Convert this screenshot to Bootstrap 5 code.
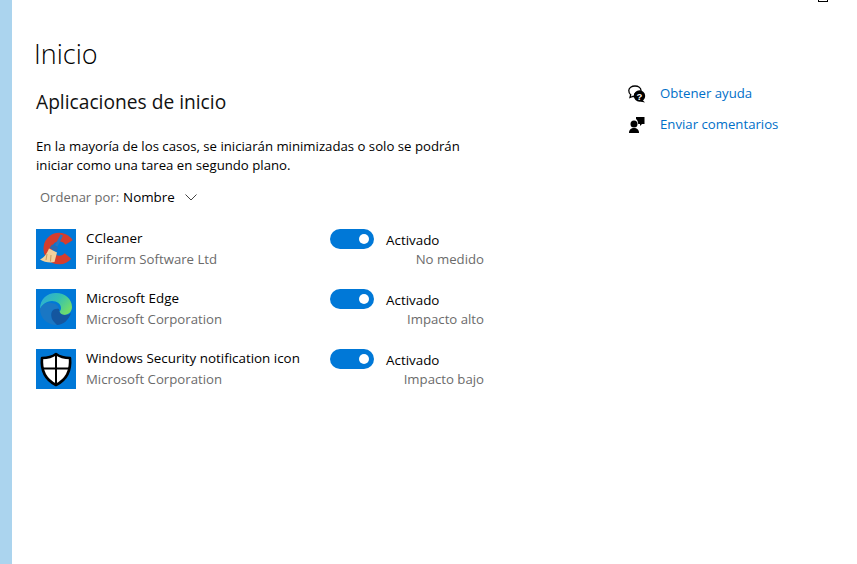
<!DOCTYPE html>
<html lang="es">
<head>
    <meta charset="UTF-8">
    <meta name="viewport" content="width=device-width, initial-scale=1.0">
    <title>Inicio</title>
    <link href="https://cdn.jsdelivr.net/npm/bootstrap@5.3.0/dist/css/bootstrap.min.css" rel="stylesheet">
    <style>
        html, body {
            height: 100%;
        }
        body {
            font-family: "Open Sans", "Liberation Sans", sans-serif;
            font-size: 13.4px;
            color: #000;
            overflow: hidden;
        }
        .side-strip {
            width: 12px;
            background-color: #abd4ee;
        }
        .main-pane {
            width: 580px;
            padding: 35px 0 0 24px;
        }
        .help-pane {
            padding: 78px 0 0 36px;
        }
        .page-title {
            font-size: 27px;
            font-weight: 300;
            line-height: 38px;
            margin: 0 0 0 -2px;
        }
        .sub-title {
            font-size: 19.2px;
            font-weight: 400;
            line-height: 26px;
            margin: 16px 0 22px;
            color: #111;
        }
        .intro-text {
            line-height: 19px;
            width: 440px;
            margin-bottom: 13px;
            font-size: 13.2px;
        }
        .sort-line {
            padding-left: 4px;
            line-height: 19px;
            height: 19px;
            margin-bottom: 22px;
        }
        .sort-label {
            color: #6b6b6b;
            font-size: 13px;
            margin-right: 4px;
        }
        .sort-chevron {
            margin-left: 10px;
        }
        .muted-text {
            color: #6b6b6b;
            font-size: 13.2px;
        }
        .app-row {
            height: 60px;
        }
        .app-icon {
            width: 40px;
            height: 40px;
            background-color: #0078d7;
            flex: none;
        }
        .app-name {
            width: 254px;
            padding-left: 10px;
            line-height: 21px;
            margin-top: -1px;
        }
        .app-state {
            width: 154px;
        }
        .toggle-pill {
            width: 44px;
            height: 20px;
            border-radius: 10px;
            background-color: #0078d7;
            position: relative;
        }
        .toggle-pill::after {
            content: "";
            position: absolute;
            right: 5px;
            top: 5px;
            width: 10px;
            height: 10px;
            border-radius: 50%;
            background-color: #fff;
        }
        .state-text {
            line-height: 20px;
        }
        .state-label {
            position: relative;
            top: 1px;
            margin-left: 12px;
        }
        .help-link {
            color: #006fc8;
            font-size: 13.2px;
            text-decoration: none;
            margin-left: 14px;
        }
        .help-item {
            height: 31px;
        }
        .window-mark {
            position: absolute;
            left: 818px;
            top: -8px;
            width: 10px;
            height: 10px;
            border: 1px solid #000;
        }
    </style>
</head>
<body class="d-flex">
    <div class="side-strip"></div>
    <div class="window-mark"></div>

    <!-- Left column -->
    <div class="main-pane">
        <h1 class="page-title">Inicio</h1>
        <h2 class="sub-title">Aplicaciones de inicio</h2>
        <p class="intro-text">En la mayoría de los casos, se iniciarán minimizadas o solo se podrán iniciar como una tarea en segundo plano.</p>
        <div class="sort-line d-flex align-items-center">
            <span class="sort-label">Ordenar por:</span>
            <span>Nombre</span>
            <svg class="sort-chevron" width="12" height="7" viewBox="0 0 12 7"><path d="M.5.500l5.500 5.500 5.500-5.500" fill="none" stroke="#444" stroke-width="1"/></svg>
        </div>

        <!-- CCleaner -->
        <div class="app-row d-flex">
            <div class="app-icon">
                <svg width="40" height="40" viewBox="0 0 40 40">
                    <path d="M33 13.500A11.500 11.500 0 1 0 32 27" fill="none" stroke="#d53d2d" stroke-width="8.500"/>
                    <path d="M24.500 5.500l2.500 1-5.500 11-2.500-1.200z" fill="#2a74c0"/>
                    <path d="M16 15.500l6 3-1.500 4-7-3.500z" fill="#2c69b0"/>
                    <path d="M13 19.500l8 4-2.500 9.500c-5 1-10.500 0-14.500-2.500 4-1.500 7-6 9-11z" fill="#f2d29d"/>
                    <path d="M11 25l-1 6M15 26l-.5 6.500" stroke="#c99a5e" stroke-width="1" fill="none"/>
                </svg>
            </div>
            <div class="app-name">
                <div>CCleaner</div>
                <div class="muted-text">Piriform Software Ltd</div>
            </div>
            <div class="app-state">
                <div class="d-flex">
                    <div class="toggle-pill"></div>
                    <span class="state-label state-text">Activado</span>
                </div>
                <div class="text-end muted-text state-text">No medido</div>
            </div>
        </div>

        <!-- Edge -->
        <div class="app-row d-flex">
            <div class="app-icon">
                <svg width="40" height="40" viewBox="0 0 40 40">
                    <defs>
                        <linearGradient id="edgeTop" x1="0" y1="0" x2="1" y2="0.6">
                            <stop offset="0" stop-color="#2aa6e0"/>
                            <stop offset="0.55" stop-color="#35c1b0"/>
                            <stop offset="1" stop-color="#6fdc6c"/>
                        </linearGradient>
                    </defs>
                    <path d="M4 20C4 10 11 4 20 4c9 0 16 6 16 14 0 5-4 8-8 8-3 0-5-1-5-3 1-1 2-2 2-4 0-4-4-7-9-7-6 0-10 4-12 8z" fill="url(#edgeTop)"/>
                    <path d="M4 20c2-4 6-7 11-6 5 0 8 3 8 6-7-1-9 4-7 10 1 2 3 4 5 6C11 36 4 29 4 20z" fill="#1a77c4"/>
                    <path d="M16 30c-2-6 0-11 7-10 0 3 2 6 6 6 3 0 5-1 6-2-2 7-8 12-14 12-2-2-4-4-5-6z" fill="#14569f"/>
                </svg>
            </div>
            <div class="app-name">
                <div>Microsoft Edge</div>
                <div class="muted-text">Microsoft Corporation</div>
            </div>
            <div class="app-state">
                <div class="d-flex">
                    <div class="toggle-pill"></div>
                    <span class="state-label state-text">Activado</span>
                </div>
                <div class="text-end muted-text state-text">Impacto alto</div>
            </div>
        </div>

        <!-- Windows Security -->
        <div class="app-row d-flex">
            <div class="app-icon">
                <svg width="40" height="40" viewBox="0 0 40 40">
                    <path d="M20 5c4 3 9 4 14 4 1 11-2 21-14 27C8 30 5 20 6 9c5 0 10-1 14-4z" fill="#fff" stroke="#000" stroke-width="2.600" stroke-linejoin="round"/>
                    <path d="M20 5v31M6 19.500h28" stroke="#000" stroke-width="2"/>
                </svg>
            </div>
            <div class="app-name">
                <div>Windows Security notification icon</div>
                <div class="muted-text">Microsoft Corporation</div>
            </div>
            <div class="app-state">
                <div class="d-flex">
                    <div class="toggle-pill"></div>
                    <span class="state-label state-text">Activado</span>
                </div>
                <div class="text-end muted-text state-text">Impacto bajo</div>
            </div>
        </div>
    </div>

    <!-- Right column -->
    <div class="help-pane">
        <div class="help-item d-flex align-items-center">
            <svg width="18" height="18" viewBox="0 0 18 18">
                <path d="M7 1c3.300 0 6 1.900 6 4.500 0 .6-.1 1-.3 1.500a5 5 0 0 0-6.500 4.500c-.5 0-1 0-1.500-.1L2 12.500l.7-2.800C1.400 8.800.8 7.300.8 5.500.8 2.900 3.700 1 7 1z" fill="none" stroke="#000" stroke-width="1.300"/>
                <circle cx="11.500" cy="11" r="5.700" fill="#000"/>
                <path d="M14.500 15l2.500 2.500-5-1z" fill="#000"/>
                <text x="11.500" y="14.500" font-size="9.500" font-weight="700" fill="#fff" text-anchor="middle" font-family="Liberation Sans">?</text>
            </svg>
            <a href="#" class="help-link">Obtener ayuda</a>
        </div>
        <div class="help-item d-flex align-items-center">
            <svg width="18" height="18" viewBox="0 0 18 18">
                <circle cx="6" cy="8" r="3.500" fill="#000"/>
                <path d="M1 17c0-3.500 2-5 5-5s5 1.500 5 5z" fill="#000"/>
                <path d="M8 1h8.500v7H14l-2 2V8h-1.800c0-2-.7-3.800-2.200-5z" fill="#000"/>
            </svg>
            <a href="#" class="help-link">Enviar comentarios</a>
        </div>
    </div>

    <script src="https://cdn.jsdelivr.net/npm/bootstrap@5.3.0/dist/js/bootstrap.bundle.min.js"></script>
</body>
</html>
